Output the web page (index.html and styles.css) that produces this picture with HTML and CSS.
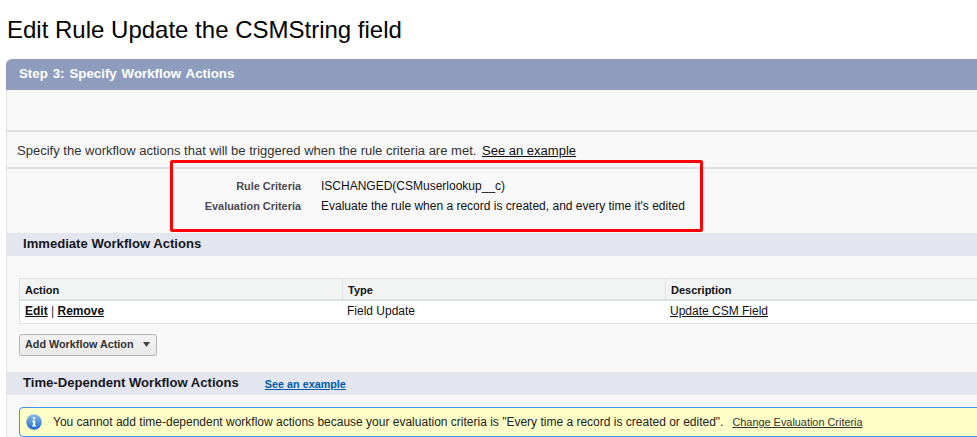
FILE: index.html
```html
<!DOCTYPE html>
<html lang="en">
<head>
<meta charset="utf-8">
<title>Edit Rule</title>
<link rel="stylesheet" href="styles.css">
</head>
<body>
<div class="page">
  <h1 class="title">Edit Rule Update the CSMString field</h1>
  <div class="panel">
    <div class="panel-head">Step 3: Specify Workflow Actions</div>
    <div class="toolbar"></div>
    <p class="intro">Specify the workflow actions that will be triggered when the rule criteria are met. <a href="#" class="intro-link">See an example</a></p>
    <dl class="criteria">
      <div class="criteria-row"><dt>Rule Criteria</dt><dd>ISCHANGED(CSMuserlookup__c)</dd></div>
      <div class="criteria-row"><dt>Evaluation Criteria</dt><dd>Evaluate the rule when a record is created, and every time it's edited</dd></div>
    </dl>
    <h2 class="subhead">Immediate Workflow Actions</h2>
    <div class="section">
      <div class="table">
        <div class="th">Action</div><div class="th">Type</div><div class="th">Description</div>
        <div class="td actions"><a href="#">Edit</a> <span class="sep">|</span> <a href="#">Remove</a></div>
        <div class="td">Field Update</div>
        <div class="td"><a href="#" class="plain">Update CSM Field</a></div>
      </div>
      <button class="menu-btn" type="button">Add Workflow Action<svg class="caret" width="7" height="5" viewBox="0 0 7 5"><path d="M0 0h7L3.500 5z"/></svg></button>
    </div>
    <h2 class="subhead subhead-two">Time-Dependent Workflow Actions<a href="#" class="blue-link">See an example</a></h2>
    <div class="section-info">
      <div class="notice">
        <svg class="info-icon" width="16" height="16" viewBox="0 0 17 17">
          <defs><linearGradient id="g" x1="0" y1="0" x2="0" y2="1"><stop offset="0" stop-color="#8dbcec"/><stop offset="1" stop-color="#1f6ac4"/></linearGradient></defs>
          <circle cx="8.500" cy="8.500" r="8.200" fill="url(#g)"/>
          <rect x="7.300" y="3.500" width="2.400" height="2.200" fill="#fff"/>
          <path d="M6.500 7h3.200v5h1v1.300H6.500V12h1V8.300h-1z" fill="#fff"/>
        </svg>
        <span class="notice-text">You cannot add time-dependent workflow actions because your evaluation criteria is "Every time a record is created or edited".</span>
        <a href="#" class="notice-link">Change Evaluation Criteria</a>
      </div>
    </div>
  </div>
  <div class="highlight"></div>
</div>
</body>
</html>
```
FILE: styles.css
```css
* { box-sizing: border-box; }
html, body { margin: 0; padding: 0; background: #fff; }
body { font-family: "Liberation Sans", Arial, sans-serif; color: #111; overflow: hidden; }
a { color: inherit; }
.page { position: relative; width: 977px; height: 437px; overflow: hidden; padding-left: 6px; }
.title { margin: 0; height: 59px; padding: 16px 0 0 1px; font-size: 24px; line-height: 28px; font-weight: 400; color: #000; }
.panel { width: 980px; background: #f8f8f8; border-left: 1px solid #e4e4e4; border-radius: 6px 0 0 0; }
.panel-head { margin-left: -1px; height: 31px; padding: 7px 0 0 13px; background: #8e9dbe; color: #fff; font-size: 13.300px; line-height: 16px; font-weight: 700; border-radius: 6px 0 0 0; word-spacing: 1.200px; }
.toolbar { height: 42px; border-bottom: 2px solid #dfdfdf; }
.intro { margin: 0; height: 37px; padding: 11px 0 0 10px; font-size: 13.030px; line-height: 16px; color: #333; border-bottom: 2px solid #dfdfdf; }
.intro-link { margin-left: 2px; color: #111; }
.criteria { margin: 0; height: 64px; padding-top: 7px; }
.criteria-row { display: flex; height: 20px; align-items: center; }
.criteria-row dt { width: 294px; text-align: right; font-size: 10.900px; font-weight: 700; color: #4a4a56; }
.criteria-row dd { margin: 0 0 0 20px; font-size: 12px; color: #111; }
.subhead { margin: 0; height: 23px; padding: 3px 0 0 16px; background: #e3e6ef; font-size: 13.100px; line-height: 16px; font-weight: 700; color: #16161e; }
.section { height: 116px; padding: 22px 0 0 12px; }
.table { display: grid; grid-template-columns: 323px 323px 1fr; width: 960px; border: 1px solid #e0e3e5; border-width: 1px 0 1px 1px; background: #fff; font-size: 12px; }
.th { height: 22px; padding: 4px 5px 0; background: #f2f3f3; border-bottom: 2px solid #e0e3e5; border-right: 1px solid #e0e3e5; font-size: 11px; line-height: 14px; font-weight: 700; color: #111; }
.td { height: 22px; padding: 3px 4px 0 5px; line-height: 15px; color: #111; }
.td + .td { padding-left: 4px; }
.actions { font-weight: 700; }
.sep { font-weight: 400; color: #333; }
.plain { font-weight: 400; }
.menu-btn { display: flex; align-items: center; margin-top: 10px; width: 138px; height: 22px; padding: 0 0 2px 5px; border: 1px solid #b5b5b5; border-radius: 3px; background: linear-gradient(#f4f4f4, #e8e8e8); font-family: inherit; font-size: 10.800px; font-weight: 700; color: #333; }
.caret { margin-left: 9px; fill: #444; }
.subhead-two { padding-left: 16px; }
.blue-link { margin-left: 26px; font-size: 10.800px; color: #015ba7; vertical-align: -1px; }
.section-info { padding: 12px 0 0 12px; }
.notice { display: flex; align-items: center; width: 970px; height: 30px; padding-left: 6px; background: #ffffc8; border: 1px solid #3d96e6; border-radius: 4px; font-size: 12px; color: #222; }
.info-icon { flex: none; }
.notice-text { margin-left: 11px; }
.notice-link { margin-left: 9px; font-size: 10.900px; color: #333; }
.highlight { position: absolute; left: 170px; top: 160px; width: 533px; height: 72px; border: 3px solid #f00; border-radius: 2px; }
```
